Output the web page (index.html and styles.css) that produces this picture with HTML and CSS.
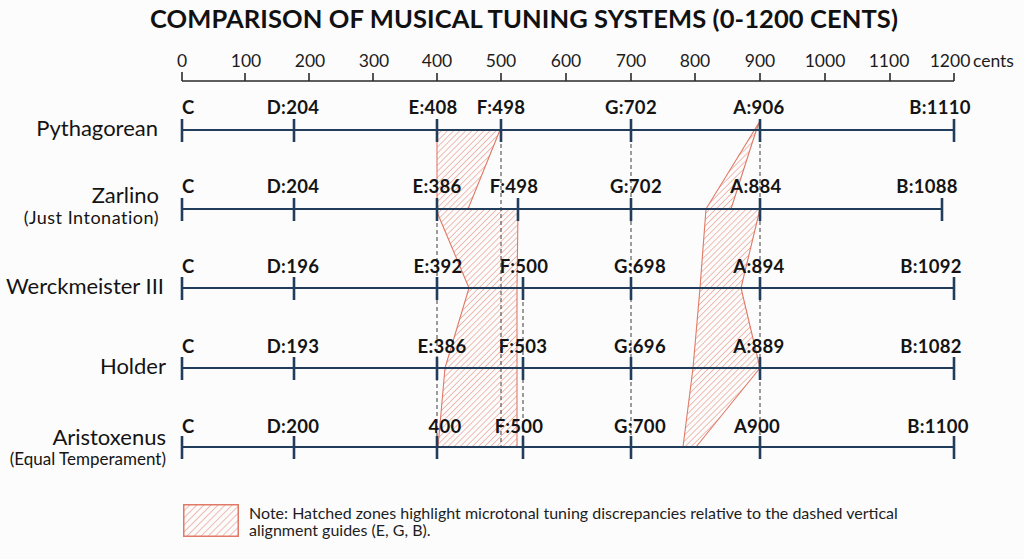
FILE: index.html
```html
<!DOCTYPE html>
<html lang="en">
<head>
<meta charset="utf-8">
<title>Comparison of Musical Tuning Systems</title>
<link rel="stylesheet" href="styles.css">
</head>
<body>
<main class="page">
  <h1 class="title">COMPARISON OF MUSICAL TUNING SYSTEMS (0-1200 CENTS)</h1>

  <svg class="chart" width="1024" height="454" viewBox="0 36 1024 454" xmlns="http://www.w3.org/2000/svg">
    <defs>
      <pattern id="hatch" width="4.3" height="4.3" patternUnits="userSpaceOnUse" patternTransform="rotate(45)">
        <line x1="0" y1="0" x2="0" y2="4.3" class="hatch-line"/>
      </pattern>
    </defs>

    <!-- axis -->
    <g class="axis">
      <line x1="182" y1="81" x2="954" y2="81"/>
      <line x1="182" y1="72" x2="182" y2="81"/>
      <line x1="245" y1="73" x2="245" y2="81"/>
      <line x1="309" y1="73" x2="309" y2="81"/>
      <line x1="373" y1="73" x2="373" y2="81"/>
      <line x1="437" y1="73" x2="437" y2="81"/>
      <line x1="501" y1="73" x2="501" y2="81"/>
      <line x1="566" y1="73" x2="566" y2="81"/>
      <line x1="631" y1="73" x2="631" y2="81"/>
      <line x1="695" y1="73" x2="695" y2="81"/>
      <line x1="760" y1="73" x2="760" y2="81"/>
      <line x1="825" y1="73" x2="825" y2="81"/>
      <line x1="890" y1="73" x2="890" y2="81"/>
      <line x1="954" y1="73" x2="954" y2="81"/>
    </g>
    <g class="axis-label">
      <text x="182" y="67">0</text>
      <text x="246" y="67">100</text>
      <text x="310" y="67">200</text>
      <text x="374" y="67">300</text>
      <text x="437" y="67">400</text>
      <text x="501" y="67">500</text>
      <text x="566" y="67">600</text>
      <text x="631" y="67">700</text>
      <text x="695" y="67">800</text>
      <text x="760" y="67">900</text>
      <text x="825" y="67">1000</text>
      <text x="889" y="67">1100</text>
      <text x="950" y="67">1200</text>
      <text x="973" y="67" class="unit">cents</text>
    </g>

    <!-- hatched discrepancy zones -->
    <polygon class="zone" points="437,130 500,130 468,209 518,209 517,288 517,368 517,447 438,447 445,368 469,288 437,212"/>
    <polygon class="zone" points="760,121 706,209 700,288 693,368 683,447 696,447 760,368 741,288 760,209 731,209 756,131"/>

    <!-- dashed alignment guides -->
    <g class="guide">
      <line x1="437" y1="209" x2="437" y2="447"/>
      <line x1="501" y1="130" x2="501" y2="447"/>
      <line x1="523" y1="288" x2="523" y2="447"/>
      <line x1="631" y1="130" x2="631" y2="447"/>
      <line x1="760" y1="130" x2="760" y2="447"/>
    </g>

    <!-- row lines + ticks -->
    <g class="row-line">
      <line x1="182" y1="130" x2="954" y2="130"/>
      <line x1="182" y1="209" x2="942" y2="209"/>
      <line x1="182" y1="288" x2="954" y2="288"/>
      <line x1="182" y1="368" x2="954" y2="368"/>
      <line x1="182" y1="447" x2="954" y2="447"/>
    </g>
    <g class="row-tick">
      <path d="M182 119v23M294 119v23M437 119v23M501 119v23M631 119v23M760 119v23M954 119v23"/>
      <path d="M182 198v23M294 198v23M437 198v23M518 198v23M631 198v23M760 198v23M942 198v23"/>
      <path d="M182 277v23M294 277v23M437 277v23M523 277v23M631 277v23M760 277v23M954 277v23"/>
      <path d="M182 357v23M294 357v23M437 357v23M523 357v23M631 357v23M760 357v23M954 357v23"/>
      <path d="M182 436v23M294 436v23M437 436v23M523 436v23M631 436v23M760 436v23M954 436v23"/>
    </g>

    <!-- note labels -->
    <g class="note">
      <text x="182" y="114" class="start">C</text>
      <text x="293" y="114">D:204</text>
      <text x="433" y="114">E:408</text>
      <text x="501" y="114">F:498</text>
      <text x="631" y="114">G:702</text>
      <text x="759" y="114">A:906</text>
      <text x="940" y="114">B:1110</text>

      <text x="182" y="193" class="start">C</text>
      <text x="293" y="193">D:204</text>
      <text x="437" y="193">E:386</text>
      <text x="514" y="193">F:498</text>
      <text x="636" y="193">G:702</text>
      <text x="756" y="193">A:884</text>
      <text x="927" y="193">B:1088</text>

      <text x="182" y="273" class="start">C</text>
      <text x="293" y="273">D:196</text>
      <text x="438" y="273">E:392</text>
      <text x="524" y="273">F:500</text>
      <text x="640" y="273">G:698</text>
      <text x="759" y="273">A:894</text>
      <text x="931" y="273">B:1092</text>

      <text x="182" y="353" class="start">C</text>
      <text x="293" y="353">D:193</text>
      <text x="442" y="353">E:386</text>
      <text x="523" y="353">F:503</text>
      <text x="640" y="353">G:696</text>
      <text x="759" y="353">A:889</text>
      <text x="931" y="353">B:1082</text>

      <text x="182" y="433" class="start">C</text>
      <text x="293" y="433">D:200</text>
      <text x="445" y="433">400</text>
      <text x="519" y="433">F:500</text>
      <text x="640" y="433">G:700</text>
      <text x="757" y="433">A900</text>
      <text x="938" y="433">B:1100</text>
    </g>

    <!-- system labels -->
    <g class="system">
      <text x="158" y="136">Pythagorean</text>
      <text x="159" y="203">Zarlino</text>
      <text x="159" y="224" class="sub sub-wide">(Just Intonation)</text>
      <text x="164" y="294">Werckmeister III</text>
      <text x="166" y="374">Holder</text>
      <text x="166" y="445">Aristoxenus</text>
      <text x="166" y="465" class="sub">(Equal Temperament)</text>
    </g>
  </svg>

  <div class="legend">
    <svg class="swatch" width="56" height="33" viewBox="0 0 56 33" xmlns="http://www.w3.org/2000/svg">
      <defs>
        <pattern id="hatch-legend" width="5" height="5" patternUnits="userSpaceOnUse" patternTransform="rotate(45)">
          <line x1="0" y1="0" x2="0" y2="5" class="hatch-line"/>
        </pattern>
      </defs>
      <rect x="0.75" y="0.75" width="54.5" height="31.5" class="swatch-rect"/>
    </svg>
    <p class="legend-text">Note: Hatched zones highlight microtonal tuning discrepancies relative to the dashed vertical alignment guides (E, G, B).</p>
  </div>
</main>
</body>
</html>
```

FILE: styles.css
```css
html, body {
  margin: 0;
  padding: 0;
  background: #fcfcfc;
}

.page {
  width: 1024px;
  height: 559px;
  overflow: hidden;
  font-family: Lato, "Open Sans", "Liberation Sans", sans-serif;
  color: #141414;
}

.title {
  margin: 0;
  height: 36px;
  padding-left: 24px;
  line-height: 36px;
  font-size: 25.5px;
  font-weight: 700;
  text-align: center;
  color: #111;
  letter-spacing: 0.1px;
}

.chart {
  display: block;
}

.hatch-line {
  stroke: #e17c69;
  stroke-width: 1;
}

.axis line {
  stroke: #2a2a2a;
  stroke-width: 1.6;
}

.axis-label text {
  font-family: Lato, "Liberation Sans", sans-serif;
  font-size: 17.5px;
  fill: #1c1c1c;
  text-anchor: middle;
}

.axis-label .unit {
  text-anchor: start;
}

.zone {
  fill: url(#hatch);
  stroke: #e07a66;
  stroke-width: 1.1;
  stroke-linejoin: round;
}

.guide line {
  stroke: #3c3c3c;
  stroke-width: 1;
  stroke-dasharray: 4 3;
}

.row-line line {
  stroke: #223c5b;
  stroke-width: 2;
}

.row-tick path {
  stroke: #223c5b;
  stroke-width: 2.6;
  fill: none;
}

.note text {
  font-family: Lato, "Liberation Sans", sans-serif;
  font-size: 18.5px;
  font-weight: 700;
  letter-spacing: 0.3px;
  fill: #141414;
  text-anchor: middle;
}

.note .start {
  text-anchor: start;
}

.system text {
  font-family: Lato, "Liberation Sans", sans-serif;
  font-size: 22px;
  fill: #141414;
  text-anchor: end;
}

.system .sub {
  font-size: 17px;
  letter-spacing: 0;
}

.system .sub-wide {
  font-size: 18px;
  letter-spacing: 0.5px;
}

.legend {
  display: flex;
  align-items: flex-start;
  gap: 10px;
  padding: 14px 0 0 183px;
}

.swatch {
  flex: none;
  display: block;
}

.swatch-rect {
  fill: url(#hatch-legend);
  stroke: #e07a66;
  stroke-width: 1.5;
}

.legend-text {
  margin: 0;
  width: 680px;
  font-size: 16px;
  line-height: 17px;
  color: #1e1e1e;
}
```
